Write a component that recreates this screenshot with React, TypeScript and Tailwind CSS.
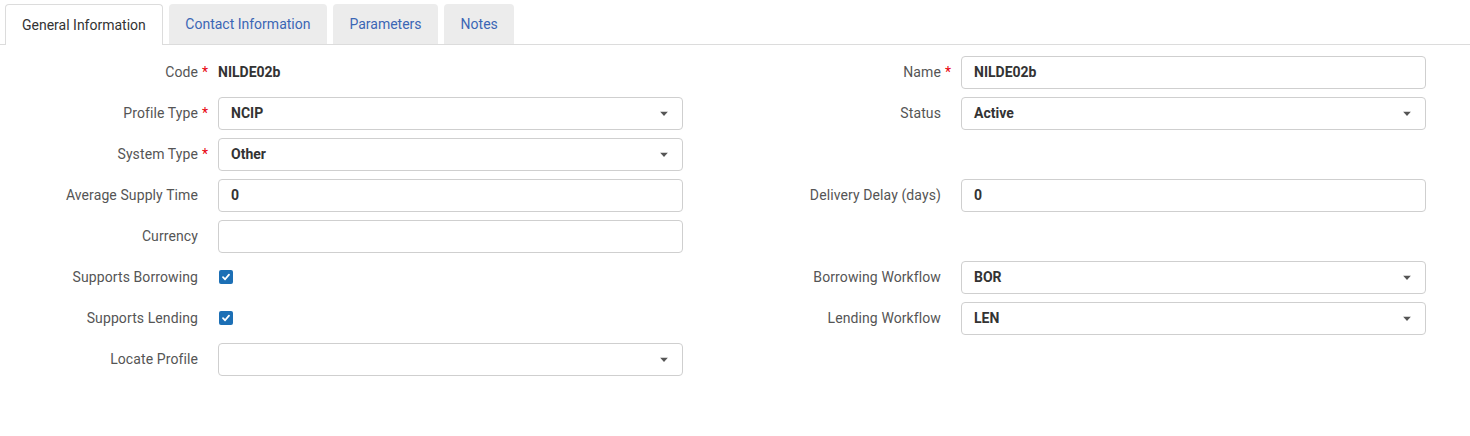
import React from "react";

const Caret = () => (
  <svg width="8" height="5" viewBox="0 0 8 5" className="absolute right-[14px] top-1/2 -translate-y-1/2">
    <path d="M0 0 L8 0 L4 4.5 Z" fill="#555" />
  </svg>
);

const Label = ({ text, req }: { text: string; req?: boolean }) => (
  <div className="flex h-[33px] items-center justify-end">
    <span className="relative text-[14px] tracking-[0.1px] text-[#555]">
      {text}
      {req && <span className="absolute left-[calc(100%+4px)] top-0 text-[#e8000b]">*</span>}
    </span>
  </div>
);

const Input = ({ value, select }: { value?: string; select?: boolean }) => (
  <div className="relative flex h-[33px] items-center rounded-[4px] border border-[#cfcfcf] bg-white pl-[12px] text-[14px] font-bold text-[#333]">
    {value}
    {select && <Caret />}
  </div>
);

const Check = () => (
  <div className="flex h-[33px] items-center">
    <div className="-mt-[1px] ml-[1px] flex h-[14px] w-[14px] items-center justify-center rounded-[2px] bg-[#1c6fb5]">
      <svg width="10" height="10" viewBox="0 0 10 10">
        <path d="M2 5.2 L4.1 7.3 L8 2.6" stroke="white" strokeWidth="1.8" fill="none" strokeLinecap="round" strokeLinejoin="round" />
      </svg>
    </div>
  </div>
);

const Empty = () => <div className="h-[33px]" />;

export default function App() {
  const tabs = ["General Information", "Contact Information", "Parameters", "Notes"];
  return (
    <div className="h-[436px] w-[1470px] bg-white" style={{ fontFamily: "Roboto, 'Liberation Sans', sans-serif" }}>
      <div className="flex gap-[6px] border-b border-[#dcdcdc] pl-[5px] pr-[2px] pt-[4px]">
        {tabs.map((t, i) =>
          i === 0 ? (
            <div
              key={t}
              className="-mb-px flex h-[41px] items-center rounded-t-[4px] border border-b-0 border-[#dcdcdc] bg-white px-[16px] text-[14px] text-[#333]"
            >
              {t}
            </div>
          ) : (
            <div
              key={t}
              className="flex h-[40px] items-center rounded-t-[4px] bg-[#ececec] px-[16.5px] text-[14px] text-[#3b66b5]"
            >
              {t}
            </div>
          )
        )}
      </div>
      <div className="grid grid-cols-[198px_465px_238px_465px] gap-x-[20px] gap-y-[8px] pt-[11px]">
        <Label text="Code" req />
        <div className="flex h-[33px] items-center text-[14px] font-bold text-[#333]">NILDE02b</div>
        <Label text="Name" req />
        <Input value="NILDE02b" />

        <Label text="Profile Type" req />
        <Input value="NCIP" select />
        <Label text="Status" />
        <Input value="Active" select />

        <Label text="System Type" req />
        <Input value="Other" select />
        <Empty />
        <Empty />

        <Label text="Average Supply Time" />
        <Input value="0" />
        <Label text="Delivery Delay (days)" />
        <Input value="0" />

        <Label text="Currency" />
        <Input />
        <Empty />
        <Empty />

        <Label text="Supports Borrowing" />
        <Check />
        <Label text="Borrowing Workflow" />
        <Input value="BOR" select />

        <Label text="Supports Lending" />
        <Check />
        <Label text="Lending Workflow" />
        <Input value="LEN" select />

        <Label text="Locate Profile" />
        <Input select />
        <Empty />
        <Empty />
      </div>
    </div>
  );
}
